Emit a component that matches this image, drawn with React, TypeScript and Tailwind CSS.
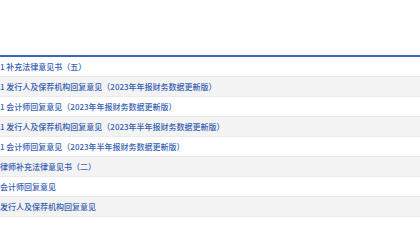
import React from 'react';

const rows = [
  '1 补充法律意见书（五）',
  '1 发行人及保荐机构回复意见（2023年年报财务数据更新版）',
  '1 会计师回复意见（2023年年报财务数据更新版）',
  '1 发行人及保荐机构回复意见（2023年半年报财务数据更新版）',
  '1 会计师回复意见（2023年半年报财务数据更新版）',
  '律师补充法律意见书（二）',
  '会计师回复意见',
  '发行人及保荐机构回复意见',
];

export default function App() {
  return (
    <div className="w-[420px] h-[240px] bg-white overflow-hidden font-['Noto_Sans_CJK_SC',sans-serif]">
      <div className="h-[55px]" />
      <div className="border-t-2 border-[#3d65b2]">
        {rows.map((text, i) => (
          <div
            key={i}
            className={`h-[20px] flex items-center border-b border-[#ebebeb] whitespace-nowrap overflow-hidden ${
              i % 2 === 1 ? 'bg-[#f3f3f3]' : 'bg-white'
            }`}
          >
            <span className="text-[8px] font-medium text-[#3560b2] leading-none">{text}</span>
          </div>
        ))}
      </div>
    </div>
  );
}
